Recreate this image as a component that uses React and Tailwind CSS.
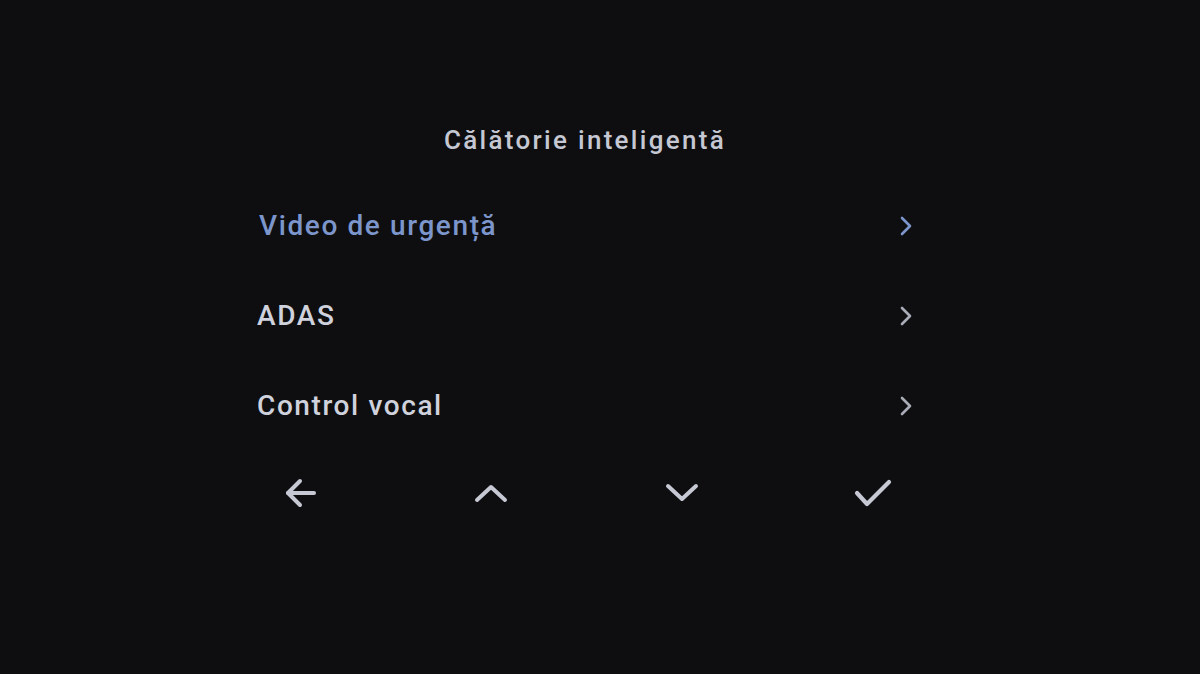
const items = [
  { label: 'Video de urgență', active: true },
  { label: 'ADAS' },
  { label: 'Control vocal' },
]

function Chevron({ color }) {
  return (
    <svg width="14" height="22" viewBox="0 0 14 22" fill="none">
      <polyline points="3,3 11,11 3,19" stroke={color} strokeWidth="2.6" strokeLinecap="round" strokeLinejoin="round" />
    </svg>
  )
}

export default function App() {
  const iconColor = '#c6c9d4'
  return (
    <div className="h-[674px] w-full overflow-hidden bg-[#0e0e10]" style={{ fontFamily: 'Roboto, "Noto Sans", sans-serif' }}>
      <div className="ml-[257px] w-[656px] pt-[120px]">
        <div className="flex h-10 items-center justify-center text-[26px] font-medium tracking-[2.3px] text-[#c5c8d2]">
          Călătorie inteligentă
        </div>

        <div className="mt-[21px] flex flex-col">
          {items.map((item) => (
            <div key={item.label} className="flex h-[90px] items-center justify-between">
              <span className={`text-[28px] font-medium tracking-[1.6px] ${item.active ? 'pl-[2px] text-[#7c96cc]' : 'text-[#cfd2dc]'}`}>
                {item.label}
              </span>
              <Chevron color={item.active ? '#7c96cc' : '#a9acb6'} />
            </div>
          ))}
        </div>

        <div className="ml-[23px] mr-[20px] flex h-[84px] items-center justify-between">
          <div className="flex w-10 justify-center">
            <svg width="34" height="32" viewBox="0 0 34 32" fill="none">
              <line x1="5" y1="16" x2="31" y2="16" stroke={iconColor} strokeWidth="4" strokeLinecap="round" />
              <polyline points="17,4 5,16 17,28" stroke={iconColor} strokeWidth="4" strokeLinecap="round" strokeLinejoin="round" />
            </svg>
          </div>
          <div className="flex w-10 justify-center">
            <svg width="34" height="20" viewBox="0 0 34 20" fill="none">
              <polyline points="3,17 17,4 31,17" stroke={iconColor} strokeWidth="4" strokeLinecap="round" strokeLinejoin="round" />
            </svg>
          </div>
          <div className="flex w-10 justify-center">
            <svg width="34" height="20" viewBox="0 0 34 20" fill="none">
              <polyline points="3,3 17,16 31,3" stroke={iconColor} strokeWidth="4" strokeLinecap="round" strokeLinejoin="round" />
            </svg>
          </div>
          <div className="flex w-10 justify-center">
            <svg width="40" height="30" viewBox="0 0 40 30" fill="none">
              <polyline points="4,15 14,26 36,4" stroke={iconColor} strokeWidth="4.2" strokeLinecap="round" strokeLinejoin="round" />
            </svg>
          </div>
        </div>
      </div>
    </div>
  )
}
